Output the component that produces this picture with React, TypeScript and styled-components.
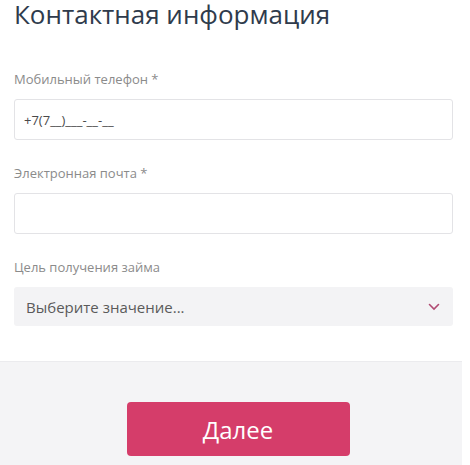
import React from 'react';
import styled, { createGlobalStyle } from 'styled-components';

const GlobalStyle = createGlobalStyle`
  html, body {
    margin: 0;
    padding: 0;
    background: #ffffff;
  }
  body {
    font-family: "Open Sans", "Noto Sans", Arial, sans-serif;
  }
`;

const Page = styled.div`
  width: 462px;
  display: flex;
  flex-direction: column;
`;

const Form = styled.div`
  padding: 0 9px 35px 14px;
`;

const Title = styled.h1`
  margin: 0 0 42px;
  font-size: 26px;
  line-height: 28px;
  font-weight: 400;
  color: #2f3b4c;
`;

const Field = styled.div`
  display: flex;
  flex-direction: column;
  margin-bottom: 24px;

  &:last-child {
    margin-bottom: 0;
  }
`;

const Label = styled.label`
  font-size: 13px;
  line-height: 18px;
  color: #8b8b8b;
  margin-bottom: 11px;
`;

const Input = styled.div`
  height: 41px;
  box-sizing: border-box;
  border: 1px solid #e3e3e6;
  border-radius: 3px;
  padding: 0 9px;
  display: flex;
  align-items: center;
  font-size: 13px;
  color: #4a4a4a;
  background: #fff;
`;

const Select = styled.div`
  height: 39px;
  box-sizing: border-box;
  border-radius: 3px;
  background: #f3f3f5;
  padding: 0 12px;
  display: flex;
  align-items: center;
  justify-content: space-between;
  font-size: 15px;
  color: #5a5a5a;
`;

const Chevron = styled.svg`
  width: 12px;
  height: 8px;
  margin-right: 1px;
`;

const Footer = styled.div`
  background: #f4f4f6;
  border-top: 1px solid #ebebee;
  height: 104px;
  display: flex;
  justify-content: center;
  padding-top: 40px;
  box-sizing: border-box;
`;

const Button = styled.button`
  width: 223px;
  height: 54px;
  border: none;
  border-radius: 4px;
  background: #d53d6a;
  color: #fff;
  font-family: "Open Sans", "Noto Sans", Arial, sans-serif;
  font-size: 24px;
  cursor: pointer;
  margin-left: 14px;
`;

export default function App() {
  return (
    <Page>
      <GlobalStyle />
      <Form>
        <Title>Контактная информация</Title>
        <Field>
          <Label>Мобильный телефон *</Label>
          <Input>+7(7__)___-__-__</Input>
        </Field>
        <Field>
          <Label>Электронная почта *</Label>
          <Input />
        </Field>
        <Field>
          <Label>Цель получения займа</Label>
          <Select>
            Выберите значение...
            <Chevron viewBox="0 0 12 8">
              <path d="M1.5 1.5 L6 6 L10.5 1.5" fill="none" stroke="#b04a72" strokeWidth="1.6" strokeLinecap="round" />
            </Chevron>
          </Select>
        </Field>
      </Form>
      <Footer>
        <Button>Далее</Button>
      </Footer>
    </Page>
  );
}
